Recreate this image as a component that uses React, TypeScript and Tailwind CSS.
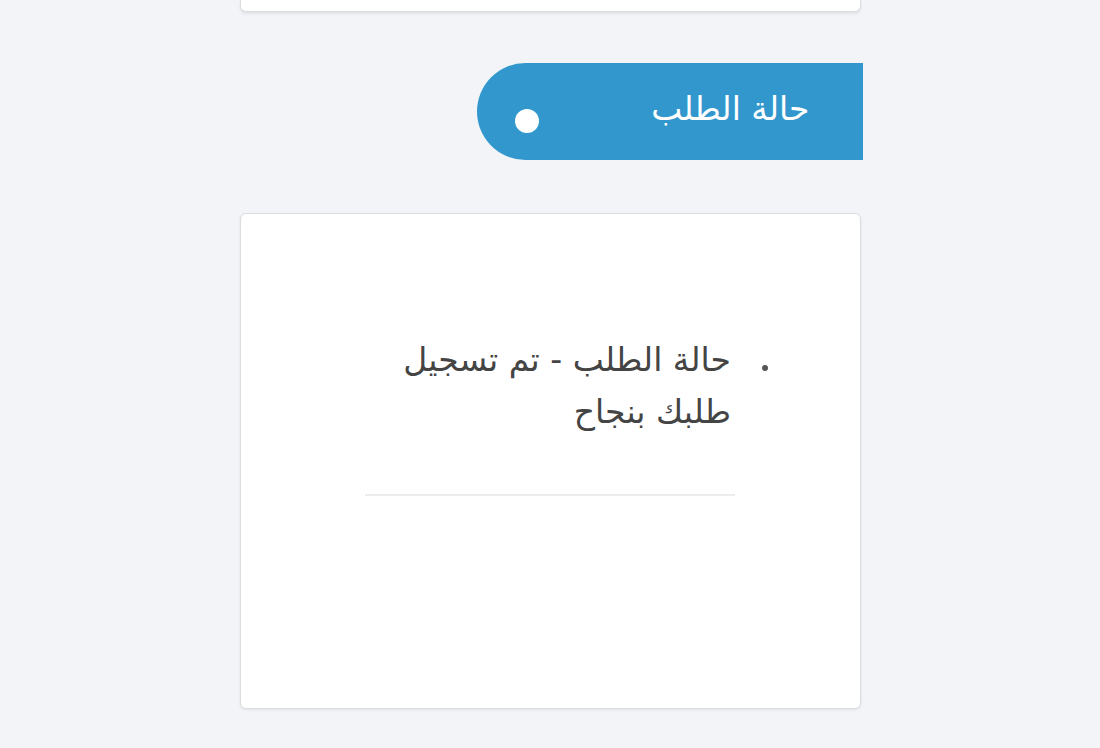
export default function App() {
    return (
        <div className="min-h-[748px] bg-[#f2f4f8]" style={{ fontFamily: '"DejaVu Sans", sans-serif' }}>
            <div className="mx-auto w-[621px] flex flex-col">
                {/* Previous card (scrolled off) */}
                <div className="h-[12px] bg-white border-x border-b border-[#dcdde0] rounded-b-md shadow-[0_2px_3px_rgba(0,0,0,0.08)]" />

                {/* Section header */}
                <div className="mt-[51px] flex justify-end -mr-[2px]">
                    <div
                        dir="rtl"
                        className="w-[386px] h-[97px] bg-[#3197cd] rounded-l-full flex items-center justify-between pr-[53px] pl-[38px]"
                    >
                        <span className="text-[33px] text-white leading-none -mt-[6px]">حالة الطلب</span>
                        <span className="w-[24px] h-[24px] rounded-full bg-white mt-[19px]" />
                    </div>
                </div>

                {/* Status card */}
                <div className="mt-[53px] h-[496px] bg-white border border-[#dcdde0] rounded-md shadow-[0_1px_3px_rgba(0,0,0,0.08)] flex justify-center">
                    <div dir="rtl" className="w-[370px] pt-[120px]">
                        <ul>
                            <li className="flex items-start">
                                <span className="shrink-0 w-[6px] h-[6px] rounded-full bg-[#555] -mr-[33px] ml-[29px] mt-[31px]" />
                                <span className="text-[33px] leading-[52px] text-[#444] mr-[2px]">حالة الطلب - تم تسجيل طلبك بنجاح</span>
                            </li>
                        </ul>
                        <div className="mt-[56px] h-[2px] bg-[#ececec]" />
                    </div>
                </div>
            </div>
        </div>
    );
}
